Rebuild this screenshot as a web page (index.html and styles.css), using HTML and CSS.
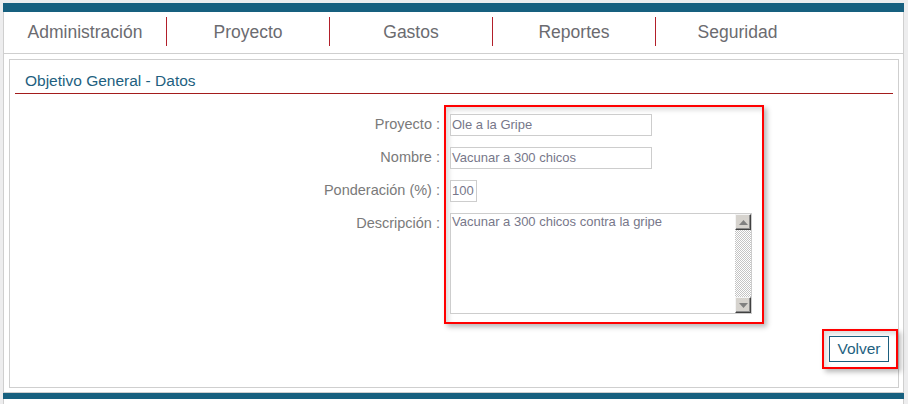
FILE: index.html
```html
<!DOCTYPE html>
<html lang="es">
<head>
<meta charset="utf-8">
<title>Objetivo General - Datos</title>
<link rel="stylesheet" href="styles.css">
</head>
<body>
<div class="page">
  <div class="topbar"></div>
  <nav class="nav">
    <div class="nav-item">Administración</div>
    <div class="nav-item">Proyecto</div>
    <div class="nav-item">Gastos</div>
    <div class="nav-item">Reportes</div>
    <div class="nav-item last">Seguridad</div>
  </nav>
  <div class="content">
    <h1 class="title">Objetivo General - Datos</h1>
    <div class="form">
      <div class="labels">
        <div class="label">Proyecto :</div>
        <div class="label">Nombre :</div>
        <div class="label">Ponderación (%) :</div>
        <div class="label">Descripción :</div>
      </div>
      <div class="highlight fields">
        <div class="input wide">Ole a la Gripe</div>
        <div class="input wide">Vacunar a 300 chicos</div>
        <div class="input small">100</div>
        <div class="textarea">
          <div class="ta-text">Vacunar a 300 chicos contra la gripe</div>
          <div class="scroll">
            <div class="sb-btn"><svg width="9" height="5" viewBox="0 0 9 5"><polygon points="0,5 9,5 4.5,0" fill="#808080"/></svg></div>
            <div class="sb-track"></div>
            <div class="sb-btn"><svg width="9" height="5" viewBox="0 0 9 5"><polygon points="0,0 9,0 4.5,5" fill="#808080"/></svg></div>
          </div>
        </div>
      </div>
    </div>
    <div class="actions">
      <div class="highlight btn-wrap">
        <button class="btn" type="button">Volver</button>
      </div>
    </div>
  </div>
  <div class="footbar"></div>
</div>
</body>
</html>
```

FILE: styles.css
```css
* { box-sizing: border-box; }
html, body { margin: 0; padding: 0; }
body {
  background: #ededee;
  font-family: "Liberation Sans", Arial, sans-serif;
  width: 908px;
  height: 404px;
  overflow: hidden;
}
.page {
  margin: 3px 0 0 3px;
  width: 901px;
  background: #fff;
  border-left: 1px solid #cfcfcf;
  border-right: 1px solid #cfcfcf;
  padding-bottom: 5px;
}
.topbar {
  height: 9px;
  background: #17607f;
  margin: 0 -1px;
}
.nav {
  display: flex;
  height: 42px;
  border-bottom: 1px solid #cfcfcf;
  padding-top: 5px;
}
.nav-item {
  width: 163px;
  height: 29px;
  padding-top: 2px;
  line-height: 27px;
  text-align: center;
  border-right: 1px solid #b21f2a;
  font-size: 17.5px;
  color: #6b6b70;
}
.nav-item.last { border-right: none; }
.content {
  margin: 5px 0 0 5px;
  width: 890px;
  height: 329px;
  border: 1px solid #cfcfcf;
}
.title {
  margin: 0 5px;
  padding: 11px 0 2px 10px;
  line-height: 20px;
  font-size: 15.5px;
  font-weight: normal;
  color: #1e5f80;
  border-bottom: 1px solid #a31c1c;
}
.form {
  display: flex;
  margin-top: 11px;
}
.labels {
  width: 434px;
  padding: 9px 4px 0 0;
}
.label {
  height: 22px;
  line-height: 20px;
  margin-bottom: 11px;
  text-align: right;
  font-size: 14.5px;
  color: #7a7a7a;
}
.highlight {
  border: 2px solid #f00;
  box-shadow: 3px 3px 5px rgba(0,0,0,0.28), inset 3px 3px 5px rgba(0,0,0,0.14);
}
.fields {
  width: 320px;
  height: 219px;
  padding: 7px 10px 8px 4px;
}
.input {
  height: 22px;
  margin-bottom: 11px;
  border: 1px solid #cdcdcd;
  background: #fff;
  font-size: 13px;
  line-height: 19px;
  padding-left: 1px;
  color: #77778a;
}
.input.wide { width: 202px; }
.input.small { width: 27px; }
.textarea {
  display: flex;
  width: 302px;
  height: 101px;
  border: 1px solid #cdcdcd;
  background: #fff;
}
.ta-text {
  flex: 1;
  font-size: 13px;
  line-height: 16px;
  padding: 0 0 0 1px;
  color: #77778a;
}
.scroll {
  width: 16px;
  display: flex;
  flex-direction: column;
}
.sb-btn {
  width: 16px;
  height: 16px;
  background: #d6d3ce;
  border-top: 1px solid #f4f4f4;
  border-left: 1px solid #f4f4f4;
  border-right: 1px solid #404040;
  border-bottom: 1px solid #404040;
  box-shadow: inset -1px -1px 0 #8a8a8a;
  display: flex;
  align-items: center;
  justify-content: center;
}
.sb-track {
  flex: 1;
  background-color: #fff;
  background-image: repeating-conic-gradient(#c4c4c4 0 25%, #fff 0 50%);
  background-size: 2px 2px;
}
.actions {
  display: flex;
  justify-content: flex-end;
  margin-top: 5px;
}
.btn-wrap {
  padding: 5px 7px 5px 5px;
}
.btn {
  display: block;
  width: 60px;
  height: 26px;
  border: 1px solid #1b5e7e;
  background: #fff;
  font-family: "Liberation Sans", Arial, sans-serif;
  font-size: 15.5px;
  color: #1e5f80;
  padding: 0;
}
.footbar {
  margin: 4px -1px 0;
  border-top: 1px solid #cfcfcf;
  height: 7px;
  background: #17607f;
}
```
